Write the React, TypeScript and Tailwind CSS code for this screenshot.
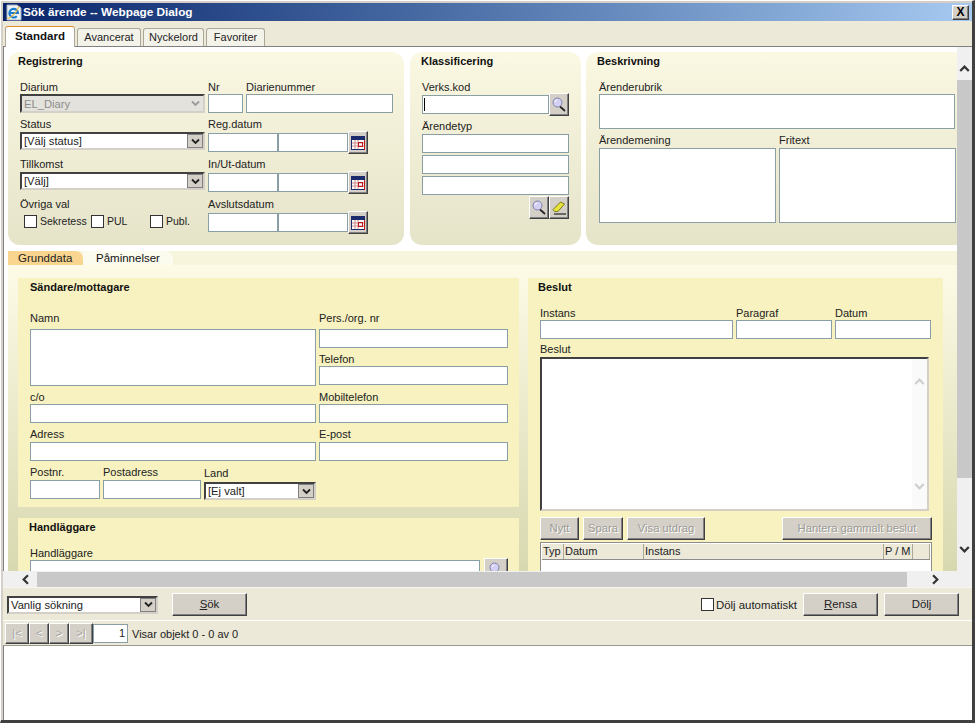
import type { ReactNode } from "react";

const Label = ({ children, className = "" }: { children: ReactNode; className?: string }) => (
  <div className={`h-[14px] whitespace-nowrap text-[11px] leading-[14px] text-[#222] ${className}`}>{children}</div>
);

const Heading = ({ children, className = "" }: { children: ReactNode; className?: string }) => (
  <div className={`box-border h-[16px] whitespace-nowrap pt-[2px] text-[11px] font-bold leading-[14px] text-[#111] ${className}`}>{children}</div>
);

const Box = ({ className = "" }: { className?: string }) => (
  <div className={`box-border h-[19px] border border-[#8a9ea6] bg-white ${className}`} />
);

const Chevron = ({ color = "#222", size = 9 }: { color?: string; size?: number }) => (
  <svg width={size} height={size} viewBox="0 0 9 9" fill="none">
    <path d="M1 2.5 L4.5 6 L8 2.5" stroke={color} strokeWidth="1.8" />
  </svg>
);

const Select = ({ text, disabled = false, className = "" }: { text: string; disabled?: boolean; className?: string }) => (
  <div
    className={`box-border flex items-center border-2 border-t-[#404040] border-l-[#404040] border-r-[#d4d0c8] border-b-[#d4d0c8] ${
      disabled ? "bg-[#e4e2dc] text-[#8c8c8c]" : "bg-white text-[#222]"
    } ${className}`}
  >
    <span className="flex-1 whitespace-nowrap pl-[2px] pt-px text-[11.2px] leading-[13px]">{text}</span>
    {disabled ? (
      <span className="flex w-[16px] justify-center">
        <Chevron color="#9a9a9a" />
      </span>
    ) : (
      <span className="flex h-full w-[16px] items-center justify-center border border-[#808080] bg-[#d4d0c8]">
        <Chevron />
      </span>
    )}
  </div>
);

const raised =
  "box-border border border-t-white border-l-white border-r-[#404040] border-b-[#404040] bg-[#d4d0c8] shadow-[inset_-1px_-1px_0_#808080]";

const IconButton = ({ children, className = "" }: { children: ReactNode; className?: string }) => (
  <div className={`flex h-[23px] w-[20px] shrink-0 items-center justify-center ${raised} ${className}`}>{children}</div>
);

const Calendar = () => (
  <svg width="14" height="14" viewBox="0 0 14 14">
    <rect x="0.5" y="0.5" width="13" height="13" fill="#fff" stroke="#1d2a6b" />
    <rect x="0" y="0" width="14" height="4" fill="#1d2a6b" />
    <path d="M1 7 H13 M1 10 H13 M4 4 V13 M7 4 V13" stroke="#d08a8a" strokeWidth="1" />
    <rect x="7.5" y="6.5" width="4" height="4" fill="none" stroke="#c01818" />
    <path d="M13.5 4 V14" stroke="#c01818" />
  </svg>
);

const Magnifier = () => (
  <svg width="14" height="15" viewBox="0 0 14 15" fill="none">
    <path d="M8 9.5 L13 14" stroke="#222" strokeWidth="1.7" />
    <circle cx="5.5" cy="5.5" r="4.5" fill="#d4d0f4" stroke="#7d80a8" />
    <path d="M3 5 A3 3 0 0 1 5 3" stroke="#fff" />
  </svg>
);

const Eraser = () => (
  <svg width="15" height="15" viewBox="0 0 15 15" fill="none">
    <path d="M1 9.5 L8.5 2 L12.5 4 L6 11.5 L2.5 11.5 Z" fill="#e6e23c" stroke="#7c7a18" />
    <path d="M2 14 H14" stroke="#222" strokeWidth="1.2" />
  </svg>
);

const IeLogo = () => (
  <svg width="16" height="17" viewBox="0 0 16 17" fill="none">
    <path d="M1 1 H11 L15 4 V16 H1 Z" fill="#eef2f8" stroke="#a8b4c4" />
    <path d="M3.6 9 H12 A4.3 4.3 0 1 0 10.8 12.2" stroke="#1a7ad0" strokeWidth="2.1" />
    <path d="M1.5 14.5 Q8 13 13 2.5" stroke="#e8bd3a" strokeWidth="1.1" />
  </svg>
);

const DateRow = () => (
  <div className="flex items-center">
    <Box className="w-[70px] bg-[#fbfdff]" />
    <Box className="w-[70px] bg-[#fbfdff]" />
    <IconButton>
      <Calendar />
    </IconButton>
  </div>
);

const CheckBox = ({ className = "" }: { className?: string }) => (
  <span className={`box-border block h-[13px] w-[13px] shrink-0 border border-[#333] bg-white ${className}`} />
);

const Registrering = () => (
  <section className="h-[193px] w-[396px] shrink-0 rounded-[12px] bg-gradient-to-b from-[#fbf8e3] to-[#e5e3c8] pl-[12px]">
    <Heading className="-ml-[2px]">Registrering</Heading>
    <div className="mt-[12px] flex">
      <div className="w-[188px] shrink-0">
        <Label className="h-[13px]">Diarium</Label>
        <Select text="EL_Diary" disabled className="h-[19px] w-[185px]" />
        <Label className="mt-[4px]">Status</Label>
        <Select text="[Välj status]" className="mt-px h-[18px] w-[185px]" />
        <Label className="mt-[7px]">Tillkomst</Label>
        <Select text="[Välj]" className="mt-px h-[18px] w-[185px]" />
        <Label className="mt-[7px]">Övriga val</Label>
        <div className="mt-[3px] flex items-center pl-[4px] text-[10.5px] leading-[14px] text-[#222]">
          <CheckBox />
          <span className="ml-[3px] w-[51px]">Sekretess</span>
          <CheckBox />
          <span className="ml-[3px] w-[43px]">PUL</span>
          <CheckBox />
          <span className="ml-[3px]">Publ.</span>
        </div>
      </div>
      <div>
        <div className="flex gap-[3px]">
          <div>
            <Label>Nr</Label>
            <Box className="w-[35px]" />
          </div>
          <div>
            <Label>Diarienummer</Label>
            <Box className="w-[147px]" />
          </div>
        </div>
        <Label className="mt-[4px]">Reg.datum</Label>
        <DateRow />
        <Label className="mt-[3px]">In/Ut-datum</Label>
        <DateRow />
        <Label className="mt-[3px] h-[13px]">Avslutsdatum</Label>
        <DateRow />
      </div>
    </div>
  </section>
);

const Klassificering = () => (
  <section className="ml-[6px] h-[193px] w-[171px] shrink-0 rounded-[12px] bg-gradient-to-b from-[#fbf8e3] to-[#e5e3c8] pl-[12px]">
    <Heading className="-ml-px">Klassificering</Heading>
    <div className="mt-[12px] w-[147px]">
      <Label>Verks.kod</Label>
      <div className="-mt-px flex items-center">
        <div className="relative box-border h-[19px] w-[127px] border border-[#8a9ea6] bg-white">
          <span className="absolute left-[1px] top-[2px] h-[13px] w-px bg-black" />
        </div>
        <IconButton>
          <Magnifier />
        </IconButton>
      </div>
      <Label className="mt-[3px]">Ärendetyp</Label>
      <Box className="mt-[1px]" />
      <Box className="mt-[2px]" />
      <Box className="mt-[2px]" />
      <div className="mt-px flex justify-end">
        <IconButton>
          <Magnifier />
        </IconButton>
        <IconButton>
          <Eraser />
        </IconButton>
      </div>
    </div>
  </section>
);

const Beskrivning = () => (
  <section className="ml-[5px] h-[193px] w-[371px] shrink-0 rounded-l-[12px] bg-gradient-to-b from-[#fbf8e3] to-[#e5e3c8] pl-[11px]">
    <Heading>Beskrivning</Heading>
    <div className="mt-[12px] pl-[2px]">
      <Label>Ärenderubrik</Label>
      <Box className="h-[35px] w-[356px]" />
      <div className="mt-[4px] flex gap-[3px]">
        <div>
          <Label className="h-[15px]">Ärendemening</Label>
          <Box className="h-[75px] w-[177px]" />
        </div>
        <div>
          <Label className="h-[15px]">Fritext</Label>
          <Box className="h-[75px] w-[177px]" />
        </div>
      </div>
    </div>
  </section>
);

const Sandare = () => (
  <section className="h-[229px] bg-[#f7f2c0] pl-[12px]">
    <Heading>Sändare/mottagare</Heading>
    <div className="mt-[17px] flex gap-[3px]">
      <div className="w-[286px]">
        <Label>Namn</Label>
        <Box className="mt-[4px] h-[57px]" />
        <Label className="mt-[4px]">c/o</Label>
        <Box />
        <Label className="mt-[4px] h-[15px]">Adress</Label>
        <Box />
        <div className="mt-[4px] flex gap-[3px]">
          <div>
            <Label className="h-[15px]">Postnr.</Label>
            <Box className="w-[70px]" />
          </div>
          <div>
            <Label className="h-[15px]">Postadress</Label>
            <Box className="w-[98px]" />
          </div>
          <div>
            <Label className="mt-[1px] h-[16px]">Land</Label>
            <Select text="[Ej valt]" className="h-[18px] w-[112px]" />
          </div>
        </div>
      </div>
      <div className="w-[189px]">
        <Label>Pers./org. nr</Label>
        <Box className="mt-[4px]" />
        <Label className="mt-[4px]">Telefon</Label>
        <Box />
        <Label className="mt-[5px]">Mobiltelefon</Label>
        <Box />
        <Label className="mt-[4px] h-[15px]">E-post</Label>
        <Box />
      </div>
    </div>
  </section>
);

const Handlaggare = () => (
  <section className="mt-[11px] h-[70px] bg-[#f7f2c0] pl-[12px]">
    <Heading className="-ml-px">Handläggare</Heading>
    <Label className="mt-[12px]">Handläggare</Label>
    <div className="flex items-start">
      <Box className="w-[450px]" />
      <IconButton className="ml-[4px] -mt-[2px] h-[23px] w-[24px]">
        <Magnifier />
      </IconButton>
    </div>
  </section>
);

const GrayButton = ({ children, className = "" }: { children: ReactNode; className?: string }) => (
  <div
    className={`flex h-[23px] items-center justify-center whitespace-nowrap text-[11.2px] text-[#9c9a94] [text-shadow:1px_1px_0_#fff] ${raised} ${className}`}
  >
    {children}
  </div>
);

const Beslut = () => (
  <section className="h-[300px] w-[415px] shrink-0 bg-[#f7f2c0] pl-[10px]">
    <Heading>Beslut</Heading>
    <div className="mt-[12px] flex gap-[3px] pl-[2px]">
      <div>
        <Label>Instans</Label>
        <Box className="w-[193px]" />
      </div>
      <div>
        <Label>Paragraf</Label>
        <Box className="w-[96px]" />
      </div>
      <div>
        <Label>Datum</Label>
        <Box className="w-[96px]" />
      </div>
    </div>
    <div className="pl-[2px]">
      <Label className="mt-[3px]">Beslut</Label>
      <div className="mt-px box-border flex h-[154px] w-[389px] justify-end border-2 border-t-[#404040] border-l-[#404040] border-r-[#d4d0c8] border-b-[#d4d0c8] bg-white">
        <div className="flex w-[15px] flex-col items-center justify-between bg-[#fafafa] py-[17px]">
          <span className="rotate-180">
            <Chevron color="#d0d0d0" size={11} />
          </span>
          <Chevron color="#d0d0d0" size={11} />
        </div>
      </div>
      <div className="mt-[6px] flex w-[392px] gap-[4px]">
        <GrayButton className="w-[39px]">Nytt</GrayButton>
        <GrayButton className="w-[40px]">Spara</GrayButton>
        <GrayButton className="w-[78px]">Visa utdrag</GrayButton>
        <GrayButton className="ml-auto w-[150px]">Hantera gammalt beslut</GrayButton>
      </div>
      <div className="mt-[2px] box-border h-[40px] w-[392px] border border-[#8c8c8c] bg-white p-px">
        <div className="flex h-[16px] w-[388px] border-b border-[#8c8c8c] bg-[#ece9d8] text-[11px] leading-[15px] text-[#222]">
          <span className="w-[22px] border-r border-[#aca899] pl-[1px]">Typ</span>
          <span className="w-[80px] border-r border-[#aca899] pl-[1px]">Datum</span>
          <span className="w-[240px] border-r border-[#aca899] pl-[1px]">Instans</span>
          <span className="w-[29px] border-r border-[#aca899] pl-[1px]">P / M</span>
          <span className="flex-1 border-r border-[#aca899]" />
        </div>
      </div>
    </div>
  </section>
);

const WinButton = ({ children }: { children: ReactNode }) => (
  <div className={`flex h-[23px] w-[75px] items-center justify-center text-[11.4px] text-[#222] ${raised}`}>{children}</div>
);

const PagerButton = ({ children, className = "" }: { children: string; className?: string }) => (
  <div className={`flex h-[21px] items-center justify-center text-[11px] text-[#a8a6a0] [text-shadow:1px_1px_0_#fff] ${raised} ${className}`}>
    {children}
  </div>
);

export default function App() {
  return (
    <div className="box-border h-[723px] w-[975px] overflow-hidden border-l border-t border-b-[3px] border-r-[3px] border-l-white border-t-white border-r-[#404040] border-b-[#404040] bg-[#d4d0c8] pl-[2px] pt-[2px] font-['Liberation_Sans',Arial,sans-serif]">
      {/* Title bar */}
      <div className="flex h-[18px] w-[969px] items-center bg-gradient-to-r from-[#0a246a] to-[#a6caf0] pl-[3px] pr-[2px]">
        <IeLogo />
        <span className="ml-[1px] pt-[2px] text-[11.8px] font-bold text-white">Sök ärende -- Webpage Dialog</span>
        <div className={`ml-auto mr-px flex h-[15px] w-[17px] items-center justify-center text-[12px] font-bold leading-none text-black ${raised}`}>
          X
        </div>
      </div>

      {/* Top tabs */}
      <div className="box-border flex h-[26px] w-[969px] items-end gap-[2px] border-b border-[#808080] bg-[#ece9d8] pl-[2px]">
        <div className="-mb-px box-border flex h-[21px] w-[70px] items-center justify-center rounded-t-[3px] border border-b-0 border-[#aca899] border-t-[#e68b2c] bg-white text-[11.5px] font-bold text-[#111]">
          Standard
        </div>
        <div className="box-border flex h-[18px] w-[64px] items-center justify-center rounded-t-[3px] border border-b-0 border-[#aca899] bg-[#f4f3ea] text-[11px] text-[#222]">
          Avancerat
        </div>
        <div className="box-border flex h-[18px] w-[61px] items-center justify-center rounded-t-[3px] border border-b-0 border-[#aca899] bg-[#f4f3ea] text-[11px] text-[#222]">
          Nyckelord
        </div>
        <div className="box-border flex h-[18px] w-[59px] items-center justify-center rounded-t-[3px] border border-b-0 border-[#aca899] bg-[#f4f3ea] text-[11px] text-[#222]">
          Favoriter
        </div>
      </div>

      {/* Scrolled content */}
      <div className="flex h-[524px] w-[969px] border-l border-[#808080] bg-white">
        <div className="h-[524px] w-[953px] overflow-hidden pl-[4px] pt-[5px]">
          <div className="flex">
            <Registrering />
            <Klassificering />
            <Beskrivning />
          </div>
          <div className="mt-[6px] flex h-[14px] w-[949px] bg-[#f7f6dc] text-[11.5px] leading-[14px] text-[#222]">
            <div className="w-[75px] rounded-tr-[8px] bg-[#f9d58f] pl-[10px]">Grunddata</div>
            <div className="w-[90px] rounded-tr-[8px] bg-[#fbfbee] pl-[13px] text-[#111]">Påminnelser</div>
          </div>
          <div className="flex h-[306px] w-[949px] gap-[9px] bg-gradient-to-b from-[#fdfbe6] to-[#d8d8b0] pl-[10px] pt-[13px]">
            <div className="w-[501px] shrink-0">
              <Sandare />
              <Handlaggare />
            </div>
            <Beslut />
          </div>
        </div>

        {/* Vertical scrollbar */}
        <div className="flex w-[15px] flex-col bg-[#f0f0f0]">
          <div className="flex h-[33px] items-end justify-center pb-[6px]">
            <span className="rotate-180">
              <Chevron color="#333" size={11} />
            </span>
          </div>
          <div className="h-[398px] bg-[#c8c8c8]" />
          <div className="flex flex-1 items-end justify-center pb-[16px]">
            <Chevron color="#333" size={11} />
          </div>
        </div>
      </div>

      {/* Horizontal scrollbar */}
      <div className="flex h-[16px] w-[969px] bg-[#f0f0f0] pt-px">
        <div className="flex w-[34px] items-center justify-center pl-[10px]">
          <span className="rotate-90">
            <Chevron color="#333" size={11} />
          </span>
        </div>
        <div className="w-[870px] bg-[#c8c8c8]" />
        <div className="flex w-[52px] items-center justify-center pl-[4px]">
          <span className="-rotate-90">
            <Chevron color="#333" size={11} />
          </span>
        </div>
      </div>

      {/* Search bar */}
      <div className="box-border flex h-[34px] w-[969px] items-center border-t border-[#f6f5ee] border-b border-b-white bg-[#ece9d8] pl-[4px] pt-px">
        <Select text="Vanlig sökning" className="h-[18px] w-[151px]" />
        <div className="ml-[14px]">
          <WinButton>
            <span>
              <span className="underline">S</span>ök
            </span>
          </WinButton>
        </div>
        <CheckBox className="ml-auto" />
        <span className="ml-[2px] pt-[2px] text-[11.4px] text-[#222]">Dölj automatiskt</span>
        <div className="ml-[6px]">
          <WinButton>
            <span>
              <span className="underline">R</span>ensa
            </span>
          </WinButton>
        </div>
        <div className="ml-[6px] mr-[13px]">
          <WinButton>Dölj</WinButton>
        </div>
      </div>

      {/* Pager */}
      <div className="box-border flex h-[25px] w-[969px] items-center border-b border-[#9c9a90] bg-[#ece9d8] pl-[2px]">
        <PagerButton className="w-[24px]">|&lt;</PagerButton>
        <PagerButton className="w-[20px]">&lt;</PagerButton>
        <PagerButton className="w-[20px]">&gt;</PagerButton>
        <PagerButton className="w-[24px]">&gt;|</PagerButton>
        <div className="box-border h-[19px] w-[35px] border border-[#8a9ea6] bg-white pr-[2px] text-right text-[11px] leading-[17px] text-[#222]">
          1
        </div>
        <span className="ml-[4px] pt-[2px] text-[11px] text-[#222]">Visar objekt 0 - 0 av 0</span>
      </div>

      {/* Empty result list */}
      <div className="h-[75px] w-[969px] border-l border-[#808080] bg-white" />
    </div>
  );
}
